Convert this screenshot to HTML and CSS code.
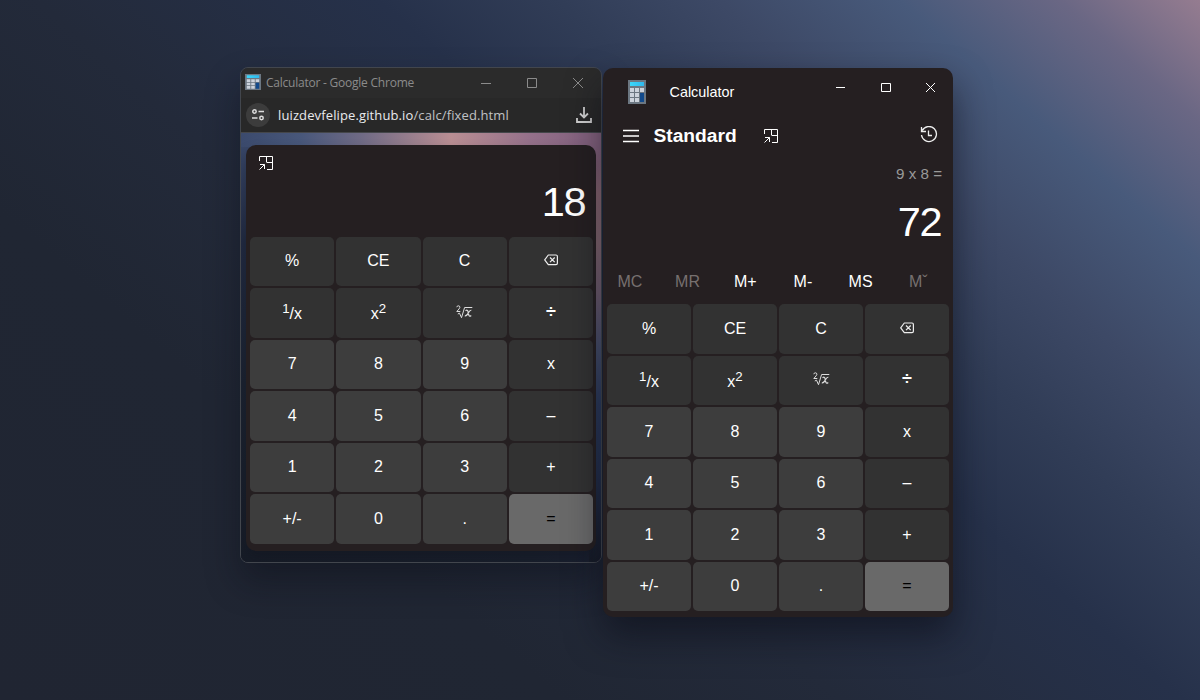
FILE: index.html
```
<!DOCTYPE html>
<html lang="en">
<head>
<meta charset="utf-8">
<title>Calculator</title>
<link rel="stylesheet" href="styles.css">
</head>
<body>
<svg class="defs" width="0" height="0">
  <defs>
    <linearGradient id="screen"><stop offset="0" stop-color="#3bd8fa"/><stop offset="1" stop-color="#2fb8ee"/></linearGradient>
    <symbol id="calc" viewBox="0 0 18 24" preserveAspectRatio="none">
      <path fill="#6c7782" d="M0 0h18v24H0z"/><path fill="url(#screen)" d="M2 2h14v4H2z"/>
      <path fill="#ccd3dc" d="M2 8h4v4H2zM7 8h4v4H7zM12 8h4v4h-4zM2 13h4v4H2zM7 13h4v4H7zM2 18h4v4H2zM7 18h4v4H7z"/>
      <path fill="#124a8c" d="M12 13h4v9h-4z"/>
    </symbol>
    <symbol id="pin" viewBox="0 0 16 16">
      <path fill="none" stroke="#fff" d="M1.500 6V1.500h13v13H9M8.500 1.500v5.500q0 .5.500.5h5.500M1.500 14.500l5-5M2 9.500h4.500V14"/>
    </symbol>
    <symbol id="back" viewBox="0 0 14 12">
      <path fill="none" stroke="#eee" stroke-width="1.200" stroke-linejoin="round" d="M4.300 1H12q1.400 0 1.400 1.400v6.800Q13.400 10.600 12 10.600H4.300L.7 5.800zM6 3.500l4.700 4.700M10.700 3.500L6 8.200"/>
    </symbol>
    <symbol id="root" viewBox="0 0 17 14">
      <path fill="none" stroke="#ddd" d="M.8 2.200Q1 .8 2.400.8T3.900 2.300Q3.900 3.300.8 6.500H4.300M1.800 9l1.700-.8 2 4.500L8.600 2.500H16.300"/>
      <path fill="none" stroke="#ddd" stroke-width="1.200" d="M9.500 5.800q2-1.500 2.500.8l.8 3.500q.6 2 2.400.4M15.300 5.300q-1.400-.3-2.700 2.300-1.600 3.700-3.800 3.300"/>
    </symbol>
  </defs>
</svg>
<main class="desktop">
  <section class="browser">
    <header class="titlebar">
      <svg class="favicon"><use href="#calc"/></svg>
      <span class="tab-title">Calculator - Google Chrome</span>
      <svg class="controls" viewBox="0 0 102 12"><path d="M0 6.500h10M46.500 1.500h9v9h-9zM92 1l10 10M102 1L92 11"/></svg>
    </header>
    <div class="address">
      <span class="site"><svg viewBox="0 0 12 12"><path d="M6.500 2.500H12M0 9h5.500"/><circle cx="2.500" cy="2.500" r="1.700"/><circle cx="9.500" cy="9" r="1.700"/></svg></span>
      <span class="url">luizdevfelipe.github.io<span>/calc/fixed.html</span></span>
      <svg class="download" viewBox="0 0 16 16"><path d="M8 0v10M4 6.500l4 4 4-4M1 11v4h14v-4"/></svg>
    </div>
    <div class="viewport">
      <div class="calculator compact">
        <svg class="pin"><use href="#pin"/></svg>
        <output class="result">18</output>
        <div class="keys">
          <button>%</button><button>CE</button><button>C</button><button><svg class="back"><use href="#back"/></svg></button>
          <button class="power"><span><sup>1</sup>/x</span></button><button class="power"><span>x<sup>2</sup></span></button><button><svg class="root"><use href="#root"/></svg></button><button class="bold">÷</button>
          <button class="num">7</button><button class="num">8</button><button class="num">9</button><button>x</button>
          <button class="num">4</button><button class="num">5</button><button class="num">6</button><button>–</button>
          <button class="num">1</button><button class="num">2</button><button class="num">3</button><button>+</button>
          <button class="num">+/-</button><button class="num">0</button><button class="num">.</button><button class="equals">=</button>
        </div>
      </div>
    </div>
  </section>
  <section class="calculator full">
    <header class="app-bar">
      <svg class="app-icon"><use href="#calc"/></svg>
      <span class="app-name">Calculator</span>
      <svg class="controls" viewBox="0 0 102 12"><path d="M1 6.500h9M46.500 2.500h9v8h-9zM91 2l9 9M100 2l-9 9"/></svg>
    </header>
    <div class="mode-bar">
      <svg class="menu" viewBox="0 0 16 14"><path d="M0 1.500h16M0 7h16M0 12.500h16"/></svg>
      <h1>Standard</h1>
      <svg class="pin"><use href="#pin"/></svg>
      <svg class="history" viewBox="0 0 18 18"><path d="M2.300 4.500A7.500 7.500 0 1 1 1.500 9M1.500 1v4.500h4.500M8.500 4.500v5H12"/></svg>
    </div>
    <div class="expression">9 x 8 =</div>
    <output class="result">72</output>
    <div class="memory"><span class="off">MC</span><span class="off">MR</span><span>M+</span><span>M-</span><span>MS</span><span class="off">Mˇ</span></div>
    <div class="keys">
      <button>%</button><button>CE</button><button>C</button><button><svg class="back"><use href="#back"/></svg></button>
      <button class="power"><span><sup>1</sup>/x</span></button><button class="power"><span>x<sup>2</sup></span></button><button><svg class="root"><use href="#root"/></svg></button><button class="bold">÷</button>
      <button class="num">7</button><button class="num">8</button><button class="num">9</button><button>x</button>
      <button class="num">4</button><button class="num">5</button><button class="num">6</button><button>–</button>
      <button class="num">1</button><button class="num">2</button><button class="num">3</button><button>+</button>
      <button class="num">+/-</button><button class="num">0</button><button class="num">.</button><button class="equals">=</button>
    </div>
  </section>
</main>
</body>
</html>
```
FILE: styles.css
```
* { box-sizing: border-box; }
body { margin: 0; font-family: "Liberation Sans", Arial, sans-serif; color: #fff; }
.defs { position: absolute; }
.desktop {
  display: flex; align-items: flex-start; gap: 1px;
  width: 1200px; height: 700px; padding: 67px 0 0 240px; overflow: hidden;
  background: linear-gradient(41deg, #202532 0%, #202633 28%, #232a3a 42%, #26314a 59%, #313d57 68%, #3d4966 76%, #485a7b 85%, #6a6784 93%, #957c90 100%);
}
.browser {
  width: 362px; height: 496px; border: 1px solid #42464d; border-radius: 8px; overflow: hidden;
  box-shadow: 0 18px 34px rgba(10, 12, 22, .42);
}
.titlebar { display: flex; align-items: center; height: 30px; padding: 0 18px 0 4px; background: #2b2b2b; }
.favicon { width: 16px; height: 16px; margin-top: -2px; }
.tab-title { margin-left: 5px; font: 12px/16px "Open Sans", sans-serif; letter-spacing: -.23px; color: #8b8b8b; white-space: nowrap; }
.controls { width: 102px; height: 12px; margin-left: auto; fill: none; stroke: #8b8b8b; }
.address { display: flex; align-items: center; height: 35px; padding: 0 9px 0 5px; background: #282828; border-bottom: 1px solid #44464a; }
.site { display: flex; align-items: center; justify-content: center; width: 24px; height: 24px; border-radius: 50%; background: #3c3c3c; }
.site svg { width: 12px; height: 12px; fill: none; stroke: #ddd; stroke-width: 1.500; }
.url { margin-left: 8px; font: 13px/18px "Open Sans", sans-serif; letter-spacing: .12px; color: #e8eaed; white-space: nowrap; }
.url span { color: #c0c2c5; }
.download { width: 16px; height: 16px; margin-left: auto; fill: none; stroke: #d0d0d0; stroke-width: 1.800; }
.viewport {
  height: 429px; padding: 12px 5px;
  background:
    linear-gradient(90deg, #3b4a6d 0, #48577a 60px, #6f6a85 120px, #b98e93 210px, #94708a 290px, #85637f 340px, #85637f 360px) top / 100% 14px no-repeat,
    linear-gradient(180deg, #85637f 0, #85637f 14px, #96707c 60px, #90717b 110px, #7b6679 160px, #4d5675 215px, #2f3f63 270px, #263351 340px, #1c2335 400px, #181d29 100%) right / 12px 100% no-repeat,
    linear-gradient(180deg, #3b4a6d 0, #212a41 110px, #1b2230 250px, #171c27 100%) left / 12px 100% no-repeat,
    linear-gradient(90deg, #171c27, #191f2c 80%, #1b2131);
}
.calculator { display: flex; flex-direction: column; width: 350px; background: #251f21; border-radius: 10px; }
.compact { height: 406px; padding: 10px 3px 7.500px 4px; box-shadow: 0 8px 14px rgba(12, 16, 25, .3); }
.pin { width: 16px; height: 16px; }
.compact .pin { margin-left: 8px; }
.result { display: block; font-size: 41.500px; line-height: 46px; letter-spacing: -1.200px; text-align: right; padding-right: 7.500px; }
.compact .result { margin-top: 8px; height: 57px; }
.keys { display: grid; grid-template-columns: repeat(4, 1fr); grid-auto-rows: 49.500px; gap: 2px; margin-top: auto; }
.keys button {
  display: flex; align-items: center; justify-content: center; padding: 0; border: 0; border-radius: 5px;
  background: #323232; color: #fff; font: 16px/18px "Liberation Sans", Arial, sans-serif;
}
.keys .power { padding-bottom: 2px; }
.keys .num { background: #3d3d3d; }
.keys .equals { background: #696969; color: #000; }
.keys .bold { padding-bottom: 2px; font-weight: bold; font-size: 18px; }
.keys sup { font-size: 13.300px; }
.back { width: 14px; height: 12px; margin-bottom: 2px; }
.root { width: 17px; height: 14px; margin-bottom: 2px; }
.full { height: 549px; margin-top: 1px; padding: 0 4px 6px; box-shadow: 0 18px 36px rgba(10, 12, 22, .58); }
.app-bar { display: flex; height: 48px; padding: 12px 12px 0 21px; }
.app-icon { width: 18px; height: 24px; }
.app-name { margin-left: 23.500px; font-size: 14.400px; line-height: 24px; }
.full .controls { margin-top: 1px; stroke: #fff; }
.mode-bar { display: flex; align-items: center; height: 40px; padding: 0 11px 0 16px; }
.menu { width: 16px; height: 14px; stroke: #fff; stroke-width: 1.500; }
.mode-bar h1 { margin: 0 0 0 14.500px; font-size: 19.200px; line-height: 24px; }
.mode-bar .pin { margin-left: 26.500px; }
.history { width: 18px; height: 18px; margin: -3px 0 0 auto; fill: none; stroke: #eee; stroke-width: 1.300; }
.expression { margin-top: 8px; padding-right: 7px; font-size: 15.200px; line-height: 20px; text-align: right; color: #999; }
.full .result { margin-top: 15px; }
.memory { display: grid; grid-template-columns: repeat(6, 57.700px); margin: 27px 0 0 -6px; font-size: 16px; line-height: 20px; text-align: center; }
.memory .off { color: #77706f; }
```
